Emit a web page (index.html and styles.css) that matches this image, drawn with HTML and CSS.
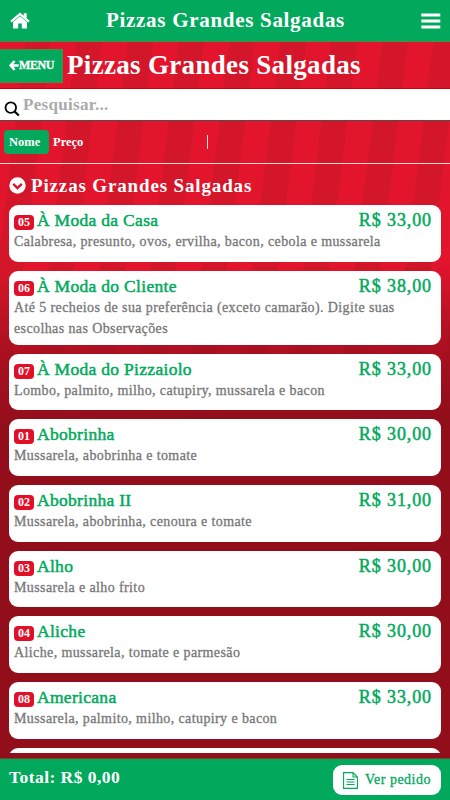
FILE: index.html
```html
<!DOCTYPE html>
<html lang="pt-BR">
<head>
    <meta charset="UTF-8">
    <meta name="viewport" content="width=device-width, initial-scale=1">
    <title>Pizzas Grandes Salgadas</title>
    <link rel="stylesheet" href="styles.css">
</head>
<body>
    <header class="topbar">
        <svg class="home-icon" viewBox="0 0 20 17">
            <path d="M0.3 8.8 L10 0.6 L13.7 3.8 V1.2 H16.7 V6.3 L19.7 8.8 L18.4 10.4 L10 3.4 L1.6 10.4 Z" fill="#fff"/>
            <path d="M3 10.1 L10 4.3 L17 10.1 V16.5 H11.8 V11.5 H8.2 V16.5 H3 Z" fill="#fff"/>
        </svg>
        <span class="topbar-title">Pizzas Grandes Salgadas</span>
        <svg class="menu-icon" viewBox="0 0 20 16">
            <path d="M0.3 0.5h19v3h-19zM0.3 6.5h19v3h-19zM0.3 12.5h19v3h-19z" fill="#fff"/>
        </svg>
    </header>

    <div class="heading">
        <button class="back-btn">
            <svg class="arrow-icon" viewBox="0 0 10 11">
                <path d="M5.6 1 L1.5 5.4 L5.6 9.8 M2 5.4 H9.6" fill="none" stroke="#fff" stroke-width="2.5"/>
            </svg><span class="back-text">MENU</span>
        </button>
        <h1>Pizzas Grandes Salgadas</h1>
    </div>

    <div class="search">
        <svg class="search-icon" viewBox="0 0 16 16">
            <circle cx="6.8" cy="6.6" r="5.3" fill="none" stroke="#000" stroke-width="1.8"/>
            <path d="M10.6 10.5 L14.8 14.5" stroke="#000" stroke-width="2.2"/>
        </svg>
        <span class="search-text">Pesquisar...</span>
    </div>

    <div class="sort">
        <span class="sort-btn active">Nome</span>
        <span class="sort-btn">Preço</span>
        <span class="divider"></span>
    </div>

    <main>
        <h2>
            <svg class="chevron-icon" viewBox="0 0 17 17">
                <circle cx="8.5" cy="8.5" r="8.2" fill="#fff"/>
                <path d="M4.2 6.8 L8.5 11 L12.8 6.8" fill="none" stroke="#d9142a" stroke-width="2.4"/>
            </svg>
            <span>Pizzas Grandes Salgadas</span>
        </h2>
        <div class="list">
            <div class="card">
                <div class="row"><span class="code">05</span><span class="name">À Moda da Casa</span><span class="price">R$ 33,00</span></div>
                <p>Calabresa, presunto, ovos, ervilha, bacon, cebola e mussarela</p>
            </div>
            <div class="card">
                <div class="row"><span class="code">06</span><span class="name">À Moda do Cliente</span><span class="price">R$ 38,00</span></div>
                <p>Até 5 recheios de sua preferência (exceto camarão). Digite suas<br>escolhas nas Observações</p>
            </div>
            <div class="card">
                <div class="row"><span class="code">07</span><span class="name">À Moda do Pizzaiolo</span><span class="price">R$ 33,00</span></div>
                <p>Lombo, palmito, milho, catupiry, mussarela e bacon</p>
            </div>
            <div class="card">
                <div class="row"><span class="code">01</span><span class="name">Abobrinha</span><span class="price">R$ 30,00</span></div>
                <p>Mussarela, abobrinha e tomate</p>
            </div>
            <div class="card">
                <div class="row"><span class="code">02</span><span class="name">Abobrinha II</span><span class="price">R$ 31,00</span></div>
                <p>Mussarela, abobrinha, cenoura e tomate</p>
            </div>
            <div class="card">
                <div class="row"><span class="code">03</span><span class="name">Alho</span><span class="price">R$ 30,00</span></div>
                <p>Mussarela e alho frito</p>
            </div>
            <div class="card">
                <div class="row"><span class="code">04</span><span class="name">Aliche</span><span class="price">R$ 30,00</span></div>
                <p>Aliche, mussarela, tomate e parmesão</p>
            </div>
            <div class="card">
                <div class="row"><span class="code">08</span><span class="name">Americana</span><span class="price">R$ 33,00</span></div>
                <p>Mussarela, palmito, milho, catupiry e bacon</p>
            </div>
            <div class="card"></div>
        </div>
    </main>

    <footer>
        <span class="total">Total: R$ 0,00</span>
        <button class="order-btn">
            <svg class="doc-icon" viewBox="0 0 15 17">
                <path d="M0.6 0.6 H10 L14.4 5 V16.4 H0.6 Z M10 0.6 V5 H14.4 M3.5 7.5 H11.5 M3.5 10 H11.5 M3.5 12.5 H11.5" fill="none" stroke="#02a95c" stroke-width="1.1"/>
            </svg>
            <span class="order-text">Ver pedido</span>
        </button>
    </footer>
</body>
</html>
```
FILE: styles.css
```css
* {
    box-sizing: border-box;
}

body {
    font-family: "Liberation Serif", serif;
    margin: 0;
    height: 800px;
    display: flex;
    flex-direction: column;
    overflow: hidden;
    color: white;
    background:
        linear-gradient(178deg, rgba(147, 14, 27, 0) 275px, rgba(147, 14, 27, 0.6) 345px, #930e1b 425px),
        repeating-linear-gradient(97deg, #d31629 0, #d31629 5px, #e3152d 5.5px, #e3152d 30px, #d31629 30.5px, #d31629 50.6px);
}

h1, h2, p {
    margin: 0;
}

span {
    white-space: nowrap;
}

button {
    border: none;
    font-family: inherit;
    cursor: pointer;
}

svg {
    flex: none;
}

.topbar {
    height: 42px;
    flex: none;
    display: flex;
    align-items: center;
    justify-content: space-between;
    padding: 0 9px 0 10px;
    background-color: #02a95c;
    border-bottom: 1px solid #4d8d42;
}

.home-icon {
    width: 20px;
    height: 17px;
}

.menu-icon {
    width: 20px;
    height: 16px;
}

.topbar-title {
    font-size: 21px;
    font-weight: bold;
    letter-spacing: 0.7px;
}

.heading {
    height: 47px;
    flex: none;
    display: flex;
    align-items: center;
    gap: 4px;
    border-bottom: 1px solid #d00010;
}

.back-btn {
    width: 63px;
    height: 34px;
    margin-top: 1px;
    padding: 0 0 0 9px;
    display: flex;
    align-items: center;
    background-color: #02a95c;
    border: 1px solid #4d8d42;
    border-left: none;
    color: white;
}

.arrow-icon {
    width: 10px;
    height: 11px;
}

.back-text {
    font-size: 12px;
    font-weight: bold;
    letter-spacing: -0.4px;
    -webkit-text-stroke: 0.3px white;
}

h1 {
    font-size: 27px;
    letter-spacing: 0.32px;
    line-height: 40px;
    white-space: nowrap;
}

.search {
    height: 32px;
    flex: none;
    display: flex;
    align-items: center;
    gap: 3px;
    padding-left: 4px;
    background-color: white;
    border-bottom: 1px solid #59494b;
}

.search-icon {
    width: 16px;
    height: 16px;
    margin-top: 8px;
}

.search-text {
    font-size: 17px;
    font-weight: bold;
    letter-spacing: 0.3px;
    color: #aaa;
}

.sort {
    height: 43px;
    flex: none;
    display: flex;
    align-items: center;
    padding-left: 4px;
    border-bottom: 1px solid #ffd5d5;
}

.sort-btn {
    font-size: 12.5px;
    font-weight: bold;
    height: 24px;
    line-height: 24px;
    padding: 0 4px;
}

.active {
    width: 45px;
    background-color: #02a95c;
    border-radius: 4px;
    padding: 0 5px;
}

.divider {
    width: 1px;
    height: 14px;
    margin-left: 120px;
    background-color: #ffe0d5;
}

main {
    flex: 1;
    min-height: 0;
    overflow: hidden;
    padding: 0 9px;
    margin-bottom: 5px;
}

h2 {
    height: 41px;
    display: flex;
    align-items: center;
    gap: 5px;
    padding-top: 2px;
    font-size: 19px;
    letter-spacing: 0.85px;
}

.chevron-icon {
    width: 17px;
    height: 17px;
}

.list {
    display: flex;
    flex-direction: column;
    gap: 9px;
}

.card {
    min-height: 56.7px;
    padding: 4px 9px 5px 5px;
    border-radius: 9px;
    background-color: white;
}

.row {
    height: 22px;
    display: flex;
    align-items: center;
}

.code {
    width: 20px;
    height: 15px;
    margin: 5px 3px 0 0;
    border-radius: 4px;
    background-color: #e01029;
    color: white;
    font-size: 12px;
    font-weight: bold;
    line-height: 15px;
    text-align: center;
}

.name, .price {
    color: #02a95c;
    margin-top: 1px;
    font-size: 17.5px;
    letter-spacing: 0.3px;
    -webkit-text-stroke: 0.5px #02a95c;
}

.price {
    margin-left: auto;
    font-size: 18px;
    letter-spacing: 0.9px;
}

.card p {
    color: #777;
    font-size: 14px;
    letter-spacing: 0.39px;
    line-height: 21.5px;
    white-space: nowrap;
    -webkit-text-stroke: 0.3px #777;
}

footer {
    height: 42px;
    flex: none;
    display: flex;
    align-items: center;
    justify-content: space-between;
    padding: 0 9px;
    background-color: #02a95c;
    border-top: 1px solid #6d4a2c;
}

.total {
    font-size: 17.5px;
    font-weight: bold;
    letter-spacing: 0.45px;
    margin-bottom: 4px;
}

.order-btn {
    width: 108px;
    height: 30px;
    padding: 0 10px;
    display: flex;
    align-items: center;
    justify-content: space-between;
    background-color: white;
    border-radius: 9px;
}

.doc-icon {
    width: 15px;
    height: 17px;
    margin-top: 2px;
}

.order-text {
    color: #02a95c;
    font-size: 14px;
    letter-spacing: 0.5px;
    -webkit-text-stroke: 0.3px #02a95c;
}
```
